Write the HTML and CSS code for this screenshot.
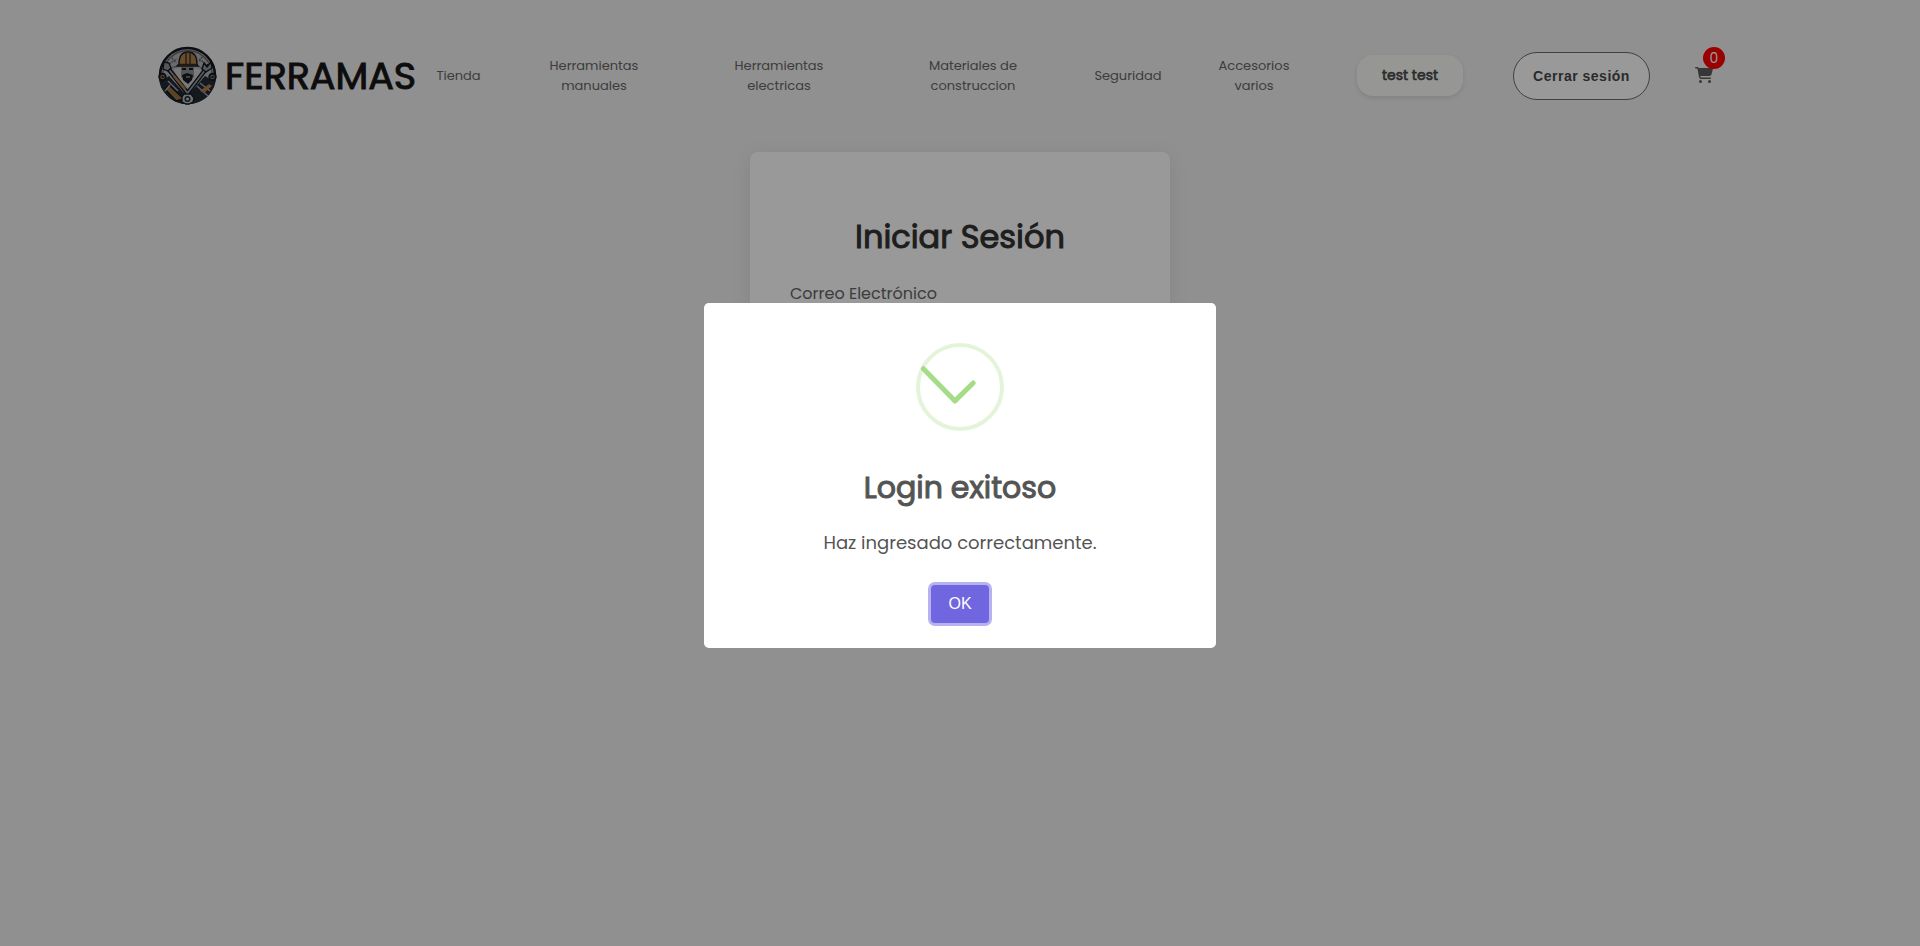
FILE: index.html
```html
<!DOCTYPE html>
<html lang="es">
<head>
<meta charset="utf-8">
<title>Ferramas</title>
<link rel="stylesheet" href="styles.css">
</head>
<body>
<header class="header">
  <svg class="logo" viewBox="0 0 60 60">
    <circle cx="30.500" cy="29.500" r="27.500" fill="#b2b3b6" stroke="#14181f" stroke-width="2.500"/>
    <circle cx="30.500" cy="29.500" r="24.800" fill="none" stroke="#555a62" stroke-width="1.200"/>
    <path d="M12 18l8-5M11 23l9-3M42 13l7 5M41 20l8 4M15 12l4 5M45 11l-3 5" stroke="#61666e" stroke-width="1.500" stroke-dasharray="2 1"/>
    <path d="M3 36l9-6 18 20 18-20 10 6q-3 14-14 19-14 6-27 0Q6 49 3 36z" fill="#242933"/>
    <path d="M17 23l5 15 8 11 8-11 6-14-7-2H23z" fill="#cbcbcd"/>
    <path d="M24 20h13v11l-6 6-7-6z" fill="#8b8c90"/>
    <path d="M25 29l5-2 6 2-1 5-4 4-5-4z" fill="#161a20"/>
    <path d="M29 31h4" stroke="#aaa" stroke-width="1.200"/>
    <path d="M25 23h4M32 23h4" stroke="#14181f" stroke-width="2"/>
    <path d="M22 18q0-12 9-12t9 12l1 2H20z" fill="#ad8046" stroke="#181a20" stroke-width="1.300"/>
    <path d="M29 6v12M33 6v12M21 18.500h19" stroke="#342b22" stroke-width="1.300"/>
    <path d="M10 21l22 28M52 19L29 49" stroke="#10151e" stroke-width="4.500"/>
    <path d="M10 21l22 28M52 19L29 49" stroke="#979ca4" stroke-width="1.700"/>
    <path d="M17 30l11 13" stroke="#ad8046" stroke-width="2.500"/>
    <path d="M7 16l5 1 2 5-3 3-5-2zM54 16l-4 5-3-4-2 6 4 3 6-4z" fill="#8b9098" stroke="#10151e" stroke-width="1.300"/>
    <path d="M8 43l4-4 15 14-8 2z" fill="#98703e" stroke="#10151e" stroke-width="1.500"/>
    <path d="M11 35l10 10M8 45l5-6M40 40l11 10M43 37l10 8" stroke="#9ba0a8" stroke-width="1.500"/>
    <path d="M43 45l9-7 3 2-8 7z" fill="#ad8046"/>
    <circle cx="5.500" cy="31" r="3.200" fill="#a0804f" stroke="#151a22" stroke-width="2"/>
    <circle cx="55.500" cy="31" r="3.200" fill="#777d86" stroke="#151a22" stroke-width="2"/>
    <circle cx="5.500" cy="31" r="1.200" fill="#191c21"/>
    <circle cx="55.500" cy="31" r="1.200" fill="#191c21"/>
    <path d="M27 48h7l3 4-1 4-4 2h-3l-4-2v-5z" fill="#b8bbc0" stroke="#151a22" stroke-width="1.300"/>
    <circle cx="30.500" cy="53" r="2.300" fill="none" stroke="#20252e" stroke-width="1.500"/>
  </svg>
  <div class="brand"><span>FERRAMAS</span></div>
  <nav class="nav">
    <a>Tienda</a>
    <a>Herramientas<br>manuales</a>
    <a>Herramientas<br>electricas</a>
    <a>Materiales de<br>construccion</a>
    <a>Seguridad</a>
    <a>Accesorios<br>varios</a>
  </nav>
  <button class="user">test test</button>
  <button class="logout">Cerrar sesión</button>
  <div class="cart">
    <svg class="cart-icon" viewBox="0 0 576 512"><path d="M0 24C0 10.700 10.700 0 24 0h45.500c22 0 41.500 12.800 50.600 32h411c26.300 0 45.500 25 38.600 50.400l-41 152.300c-8.500 31.400-37 53.300-69.500 53.300H170.700l5.400 28.500c2.200 11.300 12.100 19.500 23.600 19.500H488c13.300 0 24 10.700 24 24s-10.700 24-24 24H199.700c-34.600 0-64.300-24.600-70.700-58.500L77.400 54.500c-.7-3.800-4-6.500-7.900-6.500H24C10.700 48 0 37.300 0 24zM128 464a48 48 0 1 1 96 0 48 48 0 1 1-96 0zm336-48a48 48 0 1 1 0 96 48 48 0 1 1 0-96z"/></svg>
    <span class="badge">0</span>
  </div>
</header>
<main class="main">
  <form class="card">
    <h1 class="card-title">Iniciar Sesión</h1>
    <label class="label">Correo Electrónico</label>
  </form>
</main>
<div class="overlay">
  <div class="modal" role="dialog">
    <svg class="success" viewBox="0 0 88 88">
      <circle cx="44" cy="44" r="42" fill="none" stroke="#a5dc86" stroke-opacity=".3" stroke-width="4"/>
      <path d="M7.400 25.700L39 57.900L57.200 40" fill="none" stroke="#a5dc86" stroke-width="5" stroke-linecap="round" stroke-linejoin="round"/>
    </svg>
    <h2 class="modal-title">Login exitoso</h2>
    <p class="modal-text">Haz ingresado correctamente.</p>
    <button class="ok">OK</button>
  </div>
</div>
</body>
</html>
```
FILE: styles.css
```css
* { box-sizing: border-box; }
body {
  margin: 0;
  height: 946px;
  overflow: hidden;
  background: #f0f0f0;
  font-family: Poppins, Inter, sans-serif;
}
button { font-family: inherit; padding: 0; border: 0; white-space: nowrap; }
.header {
  display: flex;
  align-items: center;
  height: 152px;
  padding-left: 157px;
}
.logo { width: 60px; height: 60px; flex: none; margin-top: -1px; }
.brand {
  width: 208px;
  flex: none;
  padding-left: 8px;
  font-size: 38px;
  line-height: 60px;
  font-weight: 400;
  -webkit-text-stroke: 1px #171717;
  color: #171717;
}
.nav {
  display: grid;
  grid-template-columns: 67px 204px 166px 222px 88px 164px;
  align-items: center;
  justify-items: center;
  flex: none;
  font-size: 13px;
  line-height: 20px;
  text-align: center;
  color: #666;
}
.user {
  flex: none;
  width: 106px;
  height: 41px;
  margin-left: 21px;
  margin-top: -1px;
  border-radius: 16px;
  background: #fbfbf7;
  box-shadow: 0 2px 5px rgba(0, 0, 0, .1);
  font-size: 14px;
  font-weight: 400;
  -webkit-text-stroke: .6px #484848;
  color: #484848;
}
.logout {
  flex: none;
  width: 137px;
  height: 48px;
  margin-left: 50px;
  border: 1px solid #6c6c6c;
  border-radius: 24px;
  background: #fff;
  font-family: Arial, "Liberation Sans", sans-serif;
  font-size: 14px;
  line-height: 16px;
  letter-spacing: .5px;
  font-weight: 700;
  color: #484848;
}
.cart { position: relative; flex: none; width: 18px; height: 16px; margin-left: 45px; margin-top: -2px; }
.cart-icon { display: block; width: 18px; height: 16px; fill: #5c5c5c; }
.badge {
  position: absolute;
  left: 8px;
  top: -20px;
  width: 22px;
  height: 22px;
  border-radius: 50%;
  background: #f00;
  color: #fff;
  font-size: 14px;
  line-height: 22px;
  text-align: center;
}
.main { display: flex; justify-content: center; }
.card {
  width: 420px;
  height: 430px;
  padding: 61px 40px 40px;
  border-radius: 8px;
  background: #fff;
  box-shadow: 0 4px 20px rgba(0, 0, 0, .08);
}
.card-title {
  margin: 0 0 32px;
  text-align: center;
  font-size: 32px;
  line-height: 48px;
  font-weight: 400;
  -webkit-text-stroke: 1px #333;
  color: #333;
}
.label { display: block; font-size: 16px; line-height: 24px; margin-top: -11px; color: #666; }
.overlay {
  position: fixed;
  inset: 0;
  display: flex;
  align-items: center;
  justify-content: center;
  padding-top: 5px;
  background: rgba(0, 0, 0, .4);
}
.modal {
  display: flex;
  flex-direction: column;
  align-items: center;
  width: 512px;
  height: 345px;
  padding-top: 40px;
  border-radius: 5px;
  background: #fff;
  color: #545454;
}
.success { width: 88px; height: 88px; flex: none; }
.modal-title {
  margin: 33px 0 0;
  font-size: 30px;
  line-height: 48px;
  font-weight: 400;
  -webkit-text-stroke: 1px #545454;
}
.modal-text { margin: 17px 0 0; font-size: 18px; line-height: 28px; }
.ok {
  width: 58px;
  height: 38px;
  margin-top: 28px;
  border-radius: 4px;
  background: #7066e0;
  box-shadow: 0 0 0 3px rgba(112, 102, 224, .5);
  font-family: Arial, "Liberation Sans", sans-serif;
  font-size: 16px;
  color: #fff;
}
```
